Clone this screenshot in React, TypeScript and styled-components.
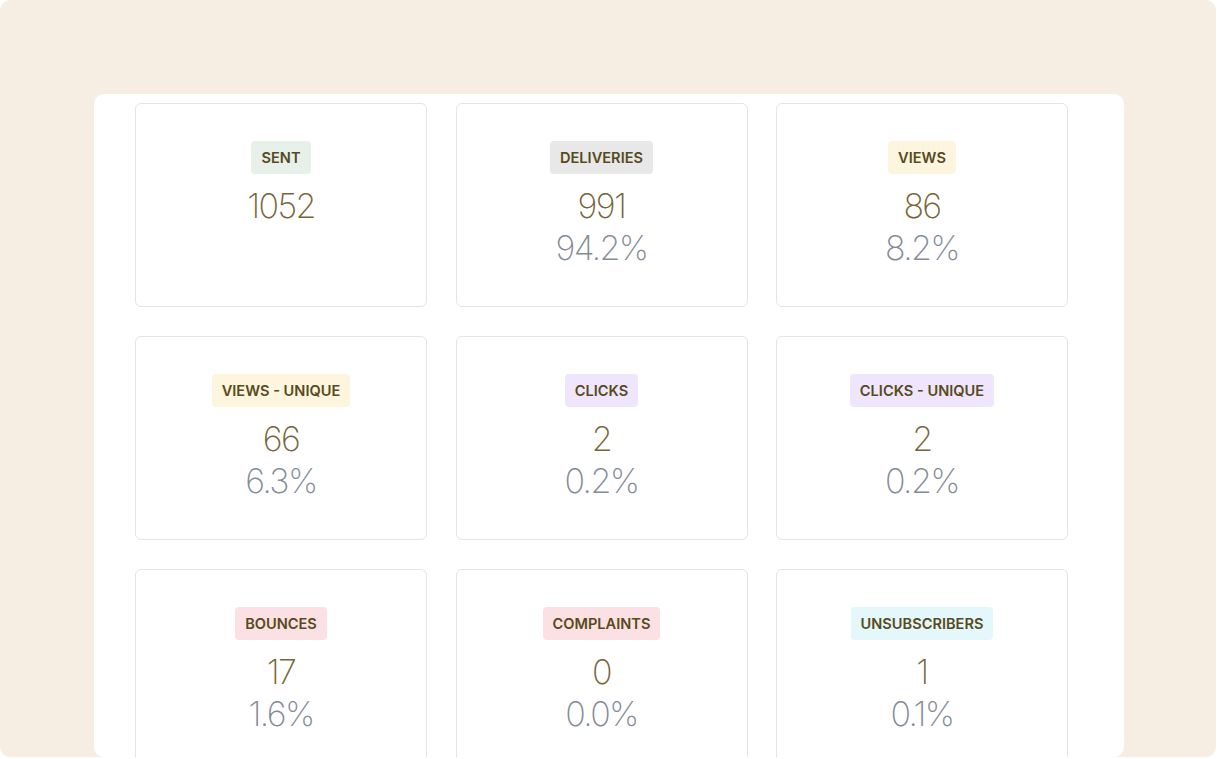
import styled, { createGlobalStyle } from "styled-components";

const GlobalStyle = createGlobalStyle`
  html, body {
    margin: 0;
    padding: 0;
    background: #ffffff;
  }
  body {
    font-family: Inter, "Open Sans", sans-serif;
  }
`;

const Backdrop = styled.div`
  width: 1216px;
  height: 757px;
  background-color: #f6eee2;
  border-radius: 10px;
  padding: 94px 0 0 94px;
  box-sizing: border-box;
  overflow: hidden;
`;

const Panel = styled.div`
  width: 1030px;
  height: 663px;
  background-color: #ffffff;
  border-radius: 10px;
  overflow: hidden;
  padding: 9px 0 0 41px;
  box-sizing: border-box;
`;

const StatsGrid = styled.div`
  display: grid;
  grid-template-columns: repeat(3, 292px);
  column-gap: 28.5px;
  row-gap: 29px;
`;

const StatCard = styled.div`
  height: 204px;
  box-sizing: border-box;
  border: 1px solid #e2e4e8;
  border-radius: 6px;
  display: flex;
  flex-direction: column;
  align-items: center;
  padding-top: 37px;
`;

type Tone = "green" | "grey" | "yellow" | "purple" | "red" | "cyan";

const toneBg: Record<Tone, string> = {
  green: "#e7f1ea",
  grey: "#e8e8e8",
  yellow: "#fdf5de",
  purple: "#efe6fd",
  red: "#fbe1e3",
  cyan: "#e4f7fb",
};

const Badge = styled.span<{ $tone: Tone }>`
  display: inline-flex;
  align-items: center;
  height: 33px;
  padding: 0 10px;
  border-radius: 4px;
  background-color: ${(p) => toneBg[p.$tone]};
  color: #574a1c;
  font-size: 14.6px;
  font-weight: 600;
  text-transform: uppercase;
  letter-spacing: 0;
`;

const Count = styled.div`
  margin-top: 11px;
  font-size: 34px;
  line-height: 42px;
  font-weight: 200;
  color: #76653a;
  letter-spacing: -1.6px;
`;

const Rate = styled.div`
  font-size: 34px;
  line-height: 42px;
  font-weight: 200;
  color: #858c97;
  letter-spacing: -1.6px;
`;

type Stat = { label: string; tone: Tone; count: number; rate?: string };

const stats: Stat[] = [
  { label: "Sent", tone: "green", count: 1052 },
  { label: "Deliveries", tone: "grey", count: 991, rate: "94.2%" },
  { label: "Views", tone: "yellow", count: 86, rate: "8.2%" },
  { label: "Views - Unique", tone: "yellow", count: 66, rate: "6.3%" },
  { label: "Clicks", tone: "purple", count: 2, rate: "0.2%" },
  { label: "Clicks - Unique", tone: "purple", count: 2, rate: "0.2%" },
  { label: "Bounces", tone: "red", count: 17, rate: "1.6%" },
  { label: "Complaints", tone: "red", count: 0, rate: "0.0%" },
  { label: "Unsubscribers", tone: "cyan", count: 1, rate: "0.1%" },
];

export default function App() {
  return (
    <>
      <GlobalStyle />
      <Backdrop>
        <Panel>
          <StatsGrid>
            {stats.map((s) => (
              <StatCard key={s.label}>
                <Badge $tone={s.tone}>{s.label}</Badge>
                <Count>{s.count}</Count>
                {s.rate && <Rate>{s.rate}</Rate>}
              </StatCard>
            ))}
          </StatsGrid>
        </Panel>
      </Backdrop>
    </>
  );
}
